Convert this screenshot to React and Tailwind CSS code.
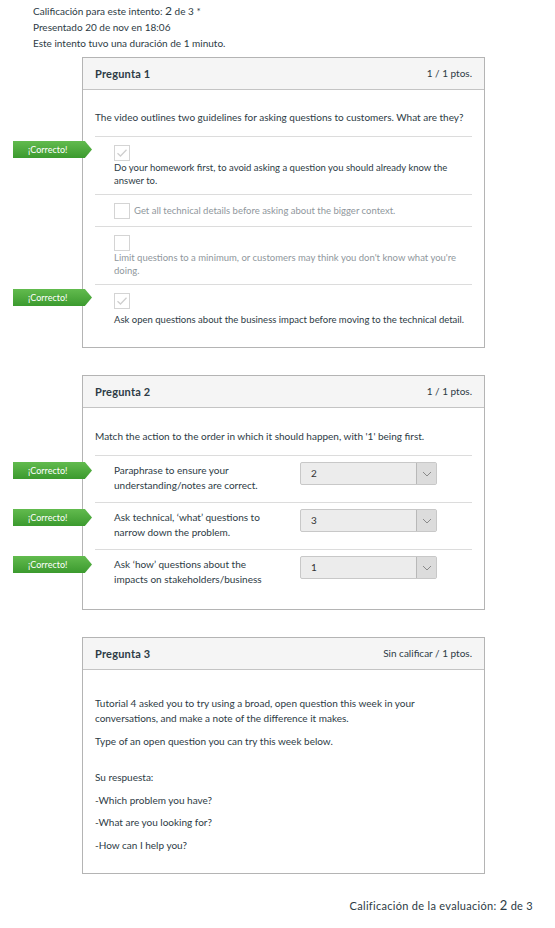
import React from 'react';

const font = { fontFamily: 'Lato, "Noto Sans", sans-serif' };

function Badge({ top }) {
  return (
    <div
      className={`absolute left-[-82px] ${top} w-[79px] h-[17px] flex items-center pl-[15px] text-[9px] text-white bg-gradient-to-b from-[#62bb4e] to-[#3b9a2e] [clip-path:polygon(0_0,91%_0,100%_50%,91%_100%,0_100%)]`}
    >
      ¡Correcto!
    </div>
  );
}

function CheckBox({ checked }) {
  return (
    <div className="w-[16px] h-[16px] border border-[#d4d4d4] bg-white flex items-center justify-center shrink-0">
      {checked && (
        <svg width="12" height="10" viewBox="0 0 12 10" fill="none">
          <path d="M1.5 5.2 L4.5 8 L10.5 1.8" stroke="#cfcfcf" strokeWidth="1.3" />
        </svg>
      )}
    </div>
  );
}

function CardHeader({ title, points }) {
  return (
    <div className="h-[32px] bg-[#f5f5f5] border-b border-[#c4c4c4] flex items-center justify-between px-[12px]">
      <span className="text-[11px] font-bold text-[#2d3b45] pt-[2px] tracking-[0.2px]">{title}</span>
      <span className="text-[10px] text-[#2d3b45]">{points}</span>
    </div>
  );
}

function Select({ value }) {
  return (
    <div className="w-[137px] h-[23px] flex border border-[#c8c8c8] rounded-[2px] bg-[#ececec]">
      <div className="flex-1 flex items-center pl-[10px] text-[10px] text-[#333]">{value}</div>
      <div className="w-[20px] border-l border-[#b8b8b8] bg-[#dcdcdc] flex items-center justify-center">
        <svg width="10" height="6" viewBox="0 0 10 6" fill="none">
          <path d="M1 1 L5 5 L9 1" stroke="#8a8a8a" strokeWidth="1" />
        </svg>
      </div>
    </div>
  );
}

function MatchRow({ text, value }) {
  return (
    <div className="relative border-t border-[#dcdcdc] h-[47px] flex pt-[6px]">
      <Badge top="top-[6px]" />
      <div className="w-[205px] pl-[19px] pr-[20px] pt-[1px] text-[10px] leading-[15px] text-[#2d3b45]">{text}</div>
      <Select value={value} />
    </div>
  );
}

export default function App() {
  return (
    <div className="min-h-[928px] bg-white text-[#2d3b45] pb-[20px]" style={font}>
      {/* Attempt summary */}
      <div className="pt-[3px] pl-[33px] text-[10px] leading-[16px]">
        <p>
          Calificación para este intento: <span className="text-[12px]">2</span> de 3 *
        </p>
        <p>Presentado 20 de nov en 18:06</p>
        <p>Este intento tuvo una duración de 1 minuto.</p>
      </div>

      <div className="ml-[82px] w-[403px] mt-[6px] flex flex-col gap-[27px]">
        {/* Pregunta 1 */}
        <div className="border border-[#b4b4b4] bg-white">
          <CardHeader title="Pregunta 1" points="1 / 1 ptos." />
          <div className="px-[12px] pt-[20px] pb-[21px]">
            <p className="text-[10px] leading-[14px] pb-[12px]">
              The video outlines two guidelines for asking questions to customers. What are they?
            </p>
            <div className="relative border-t border-[#dcdcdc] pt-[8px] pb-[7px] pl-[19px] text-[9.5px] leading-[13px]">
              <Badge top="top-[4px]" />
              <CheckBox checked />
              <p className="pr-[12px]">
                Do your homework first, to avoid asking a question you should already know the answer to.
              </p>
            </div>
            <div className="border-t border-[#dcdcdc] pt-[8px] pb-[7px] pl-[19px] flex items-center gap-[4px] text-[9.5px] text-[#8f979d]">
              <CheckBox />
              <p>Get all technical details before asking about the bigger context.</p>
            </div>
            <div className="border-t border-[#dcdcdc] pt-[8px] pb-[7px] pl-[19px] text-[9.5px] leading-[13px] text-[#8f979d]">
              <CheckBox />
              <p className="pr-[10px]">
                Limit questions to a minimum, or customers may think you don't know what you're doing.
              </p>
            </div>
            <div className="relative border-t border-[#dcdcdc] pt-[8px] pl-[19px] text-[9.5px] leading-[13px]">
              <Badge top="top-[4px]" />
              <CheckBox checked />
              <p className="pt-[4px]">
                Ask open questions about the business impact before moving to the technical detail.
              </p>
            </div>
          </div>
        </div>

        {/* Pregunta 2 */}
        <div className="border border-[#b4b4b4] bg-white">
          <CardHeader title="Pregunta 2" points="1 / 1 ptos." />
          <div className="px-[12px] pt-[21px] pb-[13px]">
            <p className="text-[10px] leading-[14px] pb-[12px]">
              Match the action to the order in which it should happen, with '1' being first.
            </p>
            <MatchRow text="Paraphrase to ensure your understanding/notes are correct." value="2" />
            <MatchRow text="Ask technical, ‘what’ questions to narrow down the problem." value="3" />
            <MatchRow text="Ask ‘how’ questions about the impacts on stakeholders/business" value="1" />
          </div>
        </div>

        {/* Pregunta 3 */}
        <div className="border border-[#b4b4b4] bg-white">
          <CardHeader title="Pregunta 3" points="Sin calificar / 1 ptos." />
          <div className="px-[12px] pt-[26px] pb-[20px] text-[10px] leading-[15px]">
            <p className="pr-[40px]">
              Tutorial 4 asked you to try using a broad, open question this week in your conversations, and make a note of the difference it makes.
            </p>
            <p className="mt-[8px]">Type of an open question you can try this week below.</p>
            <p className="mt-[21px]">Su respuesta:</p>
            <p className="mt-[8px]">-Which problem you have?</p>
            <p className="mt-[7px]">-What are you looking for?</p>
            <p className="mt-[8px]">-How can I help you?</p>
          </div>
        </div>
      </div>

      {/* Final score */}
      <div className="flex justify-end pr-[22px] mt-[22px] text-[11px] tracking-[0.3px]">
        <p>
          Calificación de la evaluación: <span className="text-[13px]">2</span> de 3
        </p>
      </div>
    </div>
  );
}
